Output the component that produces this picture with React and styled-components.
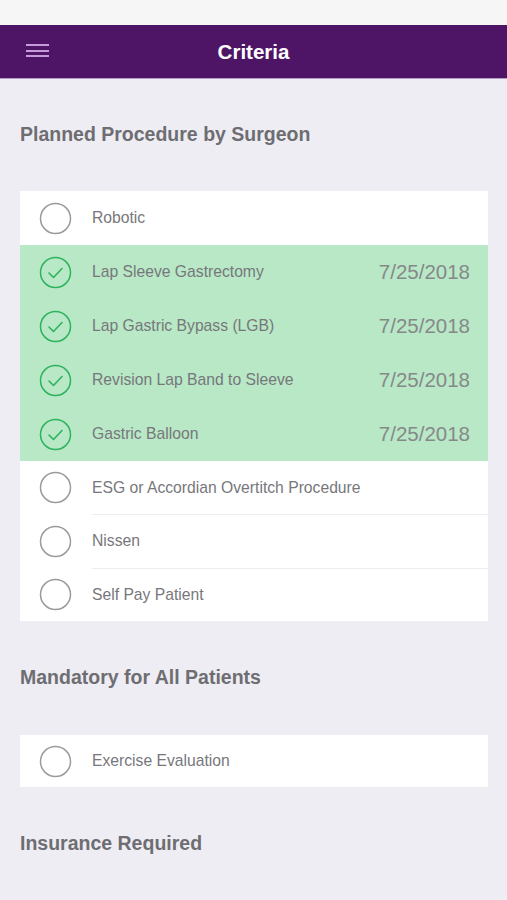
import React from "react";
import styled, { createGlobalStyle } from "styled-components";

const Global = createGlobalStyle`
  html, body { margin: 0; padding: 0; }
  body { background: #eeedf3; font-family: "Liberation Sans", Arial, sans-serif; }
`;

const Page = styled.div`
  width: 507px;
  min-height: 900px;
  background: #eeedf3;
  display: flex;
  flex-direction: column;
`;

const StatusBar = styled.div`
  height: 25px;
  background: #f6f6f6;
`;

const Header = styled.header`
  height: 54px;
  background: #4e1566;
  display: flex;
  align-items: center;
  justify-content: center;
  position: relative;
  border-bottom: 1px solid #b79cc4;
  box-sizing: border-box;
`;

const MenuButton = styled.div`
  position: absolute;
  left: 26px;
  top: 19px;
  width: 23px;
  display: flex;
  flex-direction: column;
  gap: 3.5px;
`;

const MenuLine = styled.span`
  display: block;
  height: 2px;
  background: #c69bd9;
`;

const Title = styled.h1`
  margin: 0;
  color: #ffffff;
  font-size: 20.5px;
  font-weight: 700;
`;

const Content = styled.main`
  padding: 0 19px 0 20px;
  display: flex;
  flex-direction: column;
`;

const SectionTitle = styled.h2`
  margin: 0;
  padding: ${(p) => p.$pad || "44px 0 46px"};
  font-size: 19.5px;
  font-weight: 700;
  color: #6d6d72;
  line-height: 22px;
`;

const Card = styled.div`
  background: #ffffff;
  display: flex;
  flex-direction: column;
`;

const Row = styled.div`
  height: ${(p) => p.$h || 54}px;
  display: flex;
  align-items: center;
  background: ${(p) => (p.$checked ? "#b8e8c6" : "#ffffff")};
  position: relative;
`;

const Separator = styled.div`
  position: absolute;
  left: 72px;
  right: 0;
  top: 0;
  height: 1px;
  background: #ededf0;
`;

const CircleWrap = styled.div`
  width: 72px;
  display: flex;
  justify-content: flex-start;
  padding-left: 19px;
  box-sizing: border-box;
`;

const Label = styled.span`
  flex: 1;
  font-size: 15.7px;
  color: #77777b;
`;

const DateText = styled.span`
  font-size: 20.5px;
  color: #86898a;
  padding-right: 18px;
`;

const CheckCircle = ({ checked }) => (
  <svg width="33" height="33" viewBox="0 0 33 33">
    <circle
      cx="16.5"
      cy="16.5"
      r="15"
      fill="none"
      stroke={checked ? "#2db35c" : "#9b9b9b"}
      strokeWidth="1.5"
    />
    {checked && (
      <path
        d="M10 17 L14.5 21.5 L23 12.5"
        fill="none"
        stroke="#2db35c"
        strokeWidth="1.6"
        strokeLinecap="round"
        strokeLinejoin="round"
      />
    )}
  </svg>
);

const procedures = [
  { label: "Robotic", h: 54 },
  { label: "Lap Sleeve Gastrectomy", date: "7/25/2018", h: 54 },
  { label: "Lap Gastric Bypass (LGB)", date: "7/25/2018", h: 54 },
  { label: "Revision Lap Band to Sleeve", date: "7/25/2018", h: 54 },
  { label: "Gastric Balloon", date: "7/25/2018", h: 54 },
  { label: "ESG or Accordian Overtitch Procedure", h: 53 },
  { label: "Nissen", sep: true, h: 54 },
  { label: "Self Pay Patient", sep: true, h: 53 },
];

export default function App() {
  return (
    <Page>
      <Global />
      <StatusBar />
      <Header>
        <MenuButton>
          <MenuLine />
          <MenuLine />
          <MenuLine />
        </MenuButton>
        <Title>Criteria</Title>
      </Header>
      <Content>
        <SectionTitle>Planned Procedure by Surgeon</SectionTitle>
        <Card>
          {procedures.map((p) => (
            <Row key={p.label} $checked={!!p.date} $h={p.h}>
              {p.sep && <Separator />}
              <CircleWrap>
                <CheckCircle checked={!!p.date} />
              </CircleWrap>
              <Label>{p.label}</Label>
              {p.date && <DateText>{p.date}</DateText>}
            </Row>
          ))}
        </Card>
        <SectionTitle $pad="45px 0 47px">Mandatory for All Patients</SectionTitle>
        <Card>
          <Row $h={52}>
            <CircleWrap>
              <CheckCircle />
            </CircleWrap>
            <Label>Exercise Evaluation</Label>
          </Row>
        </Card>
        <SectionTitle $pad="45px 0 40px">Insurance Required</SectionTitle>
      </Content>
    </Page>
  );
}
